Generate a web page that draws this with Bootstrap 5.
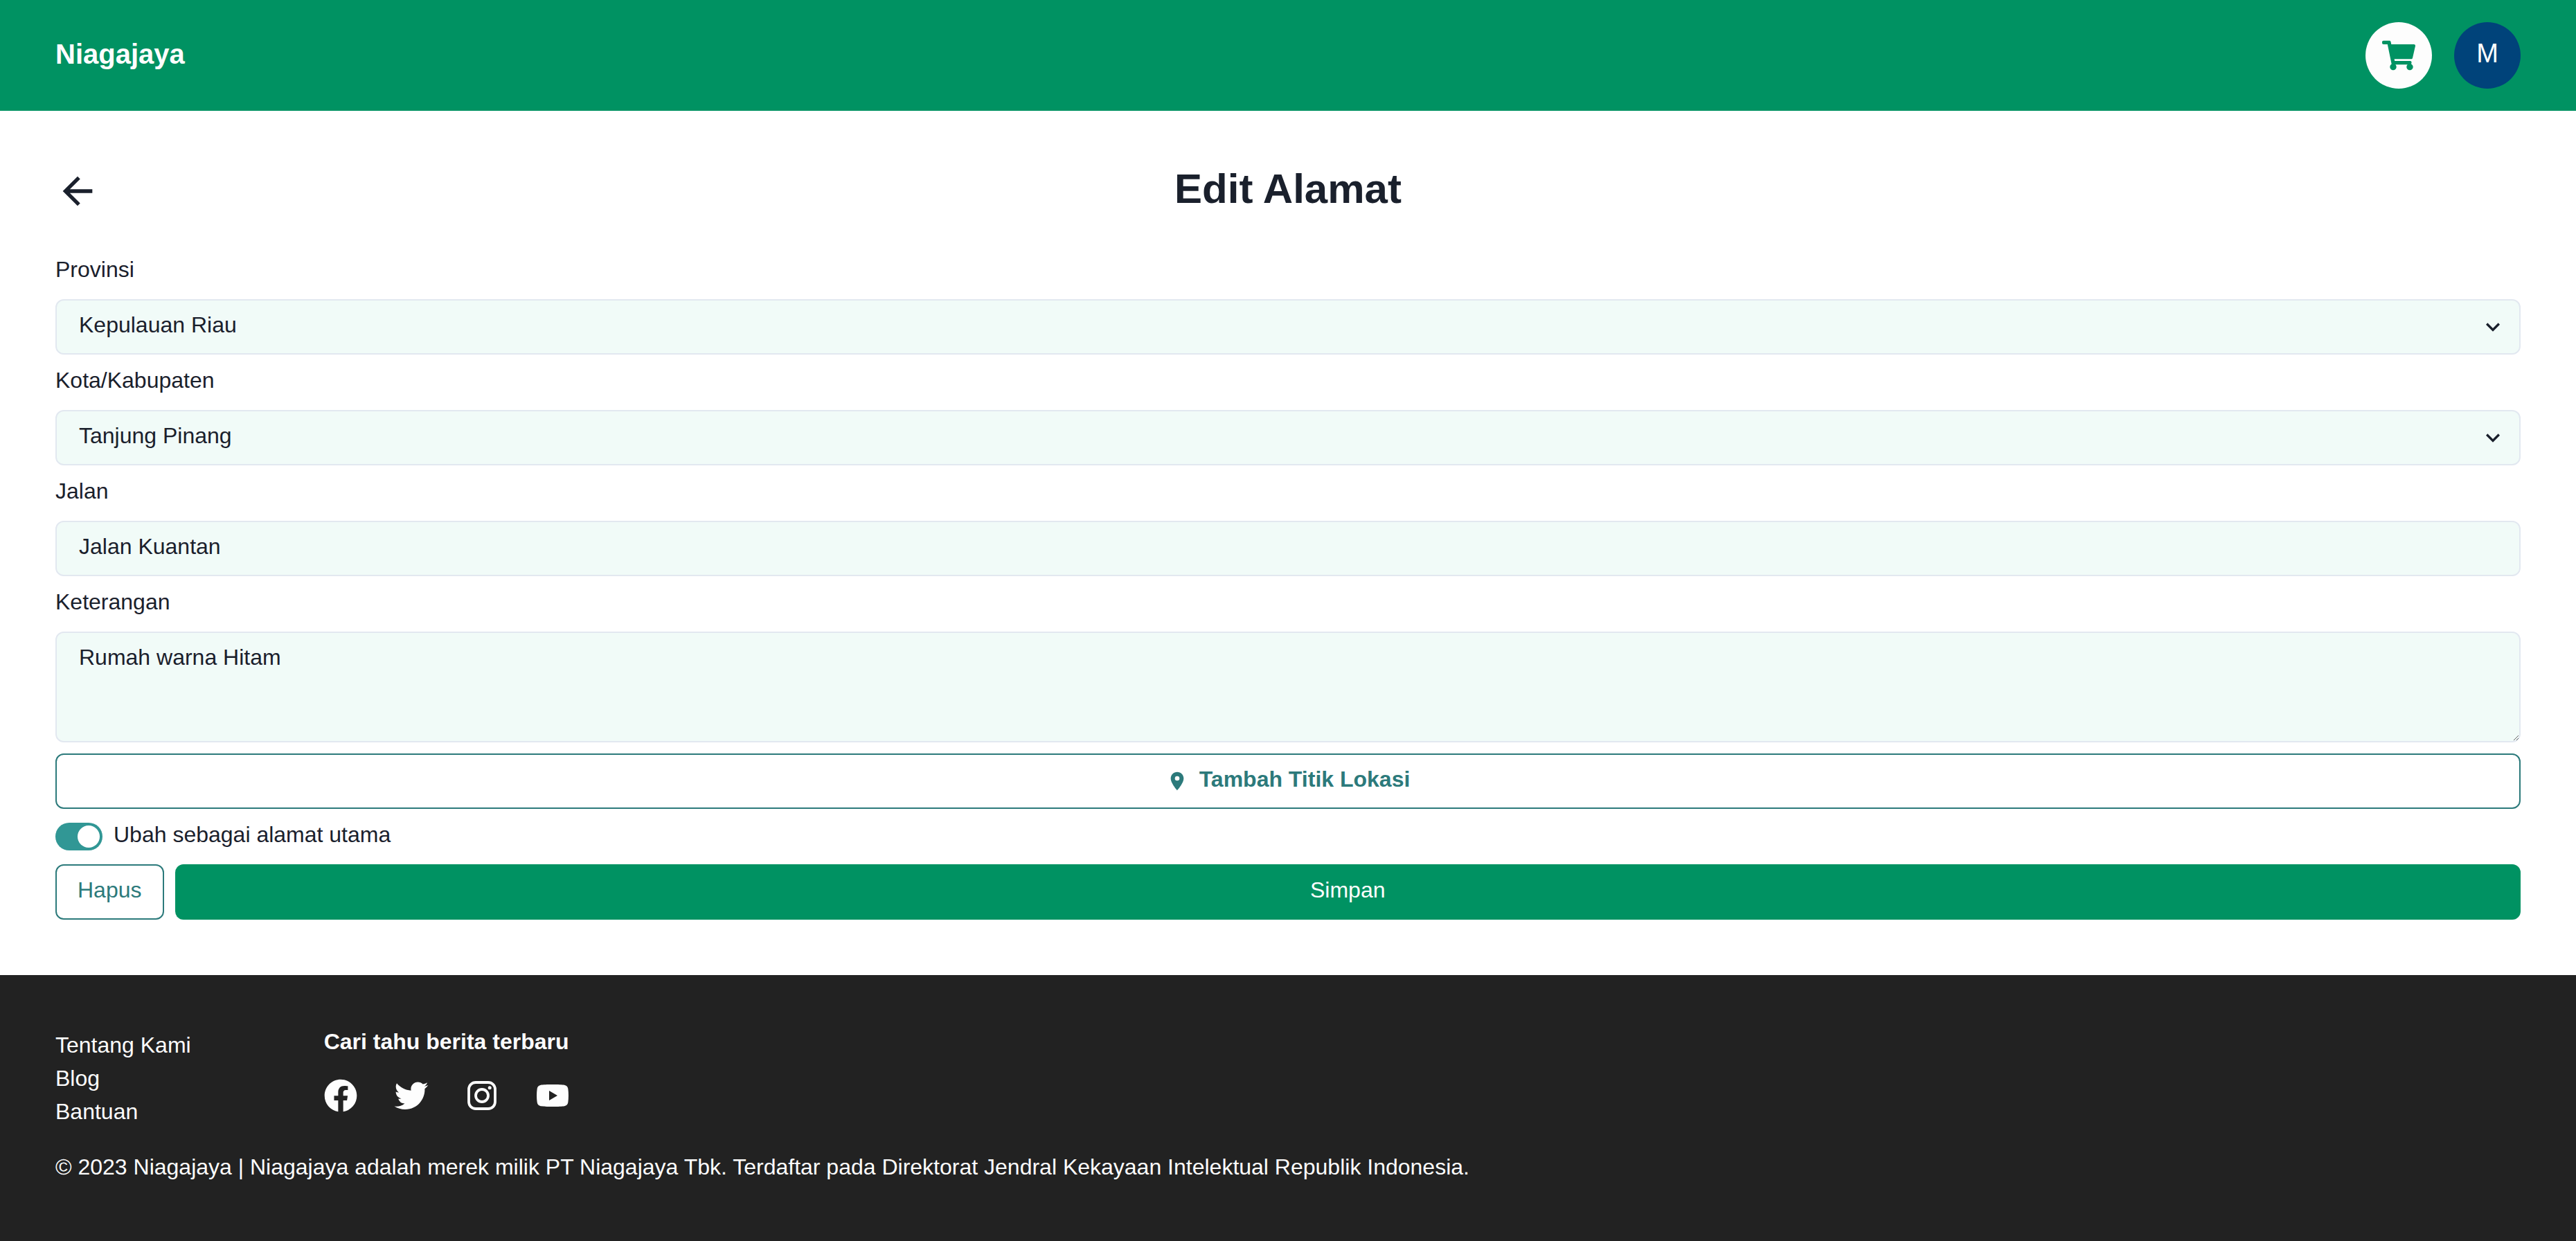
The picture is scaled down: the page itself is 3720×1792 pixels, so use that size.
<!DOCTYPE html>
<html lang="id">
<head>
<meta charset="utf-8">
<meta name="viewport" content="width=device-width, initial-scale=1">
<title>Edit Alamat - Niagajaya</title>
<link href="https://cdn.jsdelivr.net/npm/bootstrap@5.3.0/dist/css/bootstrap.min.css" rel="stylesheet">
<style>
  :root { --brand: #009262; --ink: #1a202c; --teal: #2c7a7b; --paper: #fdfdfd; }
  body { font-family: "Liberation Sans", Arial, sans-serif; font-size: 32px; line-height: 42px; color: var(--ink); background: #fff; }
  svg { display: block; flex: none; }
  .topbar { background: var(--brand); padding: 32px 80px; }
  .topbar-name { font-size: 40px; font-weight: 700; color: var(--paper); text-decoration: none; padding-bottom: 4px; }
  .topbar-actions { gap: 32px; }
  .round-btn { width: 96px; height: 96px; border: 0; }
  .cart-btn { background: var(--paper); color: var(--brand); }
  .user-btn { background: #00437a; color: #fff; font-size: 38px; padding: 0 0 6px; }
  .page { padding: 80px; }
  .title-row { display: grid; grid-template-columns: 64px 1fr 64px; margin-bottom: 56px; }
  .title-row h1 { font-size: 60px; font-weight: 700; line-height: 66px; padding-bottom: 6px; margin: 0; }
  .stack { display: flex; flex-direction: column; gap: 16px; }
  .form-label { margin: 0 0 22px; display: block; }
  .form-control, .form-select {
    display: block; font-size: 32px; line-height: 42px; color: var(--ink); background-color: #f1fbf8;
    border: 2px solid #e2e8f0; border-radius: 12px; padding: 14px 32px 20px;
  }
  .form-select {
    background-image: url("data:image/svg+xml,%3csvg xmlns='http://www.w3.org/2000/svg' viewBox='0 0 24 24'%3e%3cpath fill='%231a202c' d='M16.59 8.59L12 13.17 7.41 8.59 6 10l6 6 6-6z'/%3e%3c/svg%3e");
    background-size: 40px 40px; background-position: right 18px center;
  }
  textarea.form-control { height: 160px; }
  .btn { font-size: 32px; line-height: 42px; border-width: 2px; border-radius: 12px; padding: 14px 30px 20px; }
  .btn-line { color: var(--teal); border-color: var(--teal); }
  .btn-save { color: #fff; background: var(--brand); border-color: var(--brand); }
  .form-switch { padding: 0; margin: 0; min-height: 48px; }
  .form-switch .form-check-input {
    width: 68px; height: 40px; margin: 0; float: none; border: 0; border-radius: 20px;
  }
  .form-switch .form-check-input:checked {
    background-color: #319795; background-size: 40px 40px;
    background-image: url("data:image/svg+xml,%3csvg xmlns='http://www.w3.org/2000/svg' viewBox='-20 -20 40 40'%3e%3ccircle r='16' fill='%23fff'/%3e%3c/svg%3e");
  }
  .form-check-label { padding-bottom: 6px; }
  .site-foot { background: #222; color: var(--paper); padding: 80px; }
  .site-foot a { color: var(--paper); text-decoration: none; }
  .foot-cols { gap: 192px; margin-bottom: 32px; }
  .foot-links a, .foot-note { display: block; padding-bottom: 6px; }
  .foot-title { font-size: 32px; line-height: 32px; font-weight: 700; margin: 0 0 38px; }
  .foot-social svg { overflow: visible; }
</style>
<script src="https://cdn.jsdelivr.net/npm/bootstrap@5.3.0/dist/js/bootstrap.bundle.min.js"></script>
</head>
<body class="d-flex flex-column min-vh-100">

<header class="topbar d-flex align-items-center justify-content-between">
  <a class="topbar-name" href="#">Niagajaya</a>
  <div class="topbar-actions d-flex">
    <button type="button" class="round-btn cart-btn rounded-circle d-flex align-items-center justify-content-center" aria-label="Keranjang">
      <svg width="48" height="48" viewBox="0 -32 576 576" fill="currentColor" aria-hidden="true"><path d="M528.12 301.319l47.273-208C578.806 78.301 567.391 64 551.99 64H159.208l-9.166-44.81C147.758 8.021 137.93 0 126.529 0H24C10.745 0 0 10.745 0 24v16c0 13.255 10.745 24 24 24h69.883l70.248 343.435C147.325 417.1 136 435.222 136 456c0 30.928 25.072 56 56 56s56-25.072 56-56c0-15.674-6.447-29.835-16.824-40h209.647C430.447 426.165 424 440.326 424 456c0 30.928 25.072 56 56 56s56-25.072 56-56c0-22.172-12.888-41.332-31.579-50.405l5.517-24.276c3.413-15.018-8.002-29.319-23.403-29.319H218.117l-6.545-32h293.145c11.206 0 20.92-7.754 23.403-18.681z"/></svg>
    </button>
    <button type="button" class="round-btn user-btn rounded-circle">M</button>
  </div>
</header>

<main class="page flex-grow-1">
  <div class="title-row align-items-center">
    <a href="#" class="text-reset" aria-label="Kembali">
      <svg width="64" height="64" viewBox="0 0 24 24" fill="currentColor" aria-hidden="true"><path d="M20 11H7.83l5.59-5.59L12 4l-8 8 8 8 1.41-1.41L7.83 13H20v-2z"/></svg>
    </a>
    <h1 class="text-center">Edit Alamat</h1>
  </div>

  <form class="stack">
    <div>
      <label class="form-label" for="provinsi">Provinsi</label>
      <select class="form-select" id="provinsi"><option>Kepulauan Riau</option></select>
    </div>
    <div>
      <label class="form-label" for="kota">Kota/Kabupaten</label>
      <select class="form-select" id="kota"><option>Tanjung Pinang</option></select>
    </div>
    <div>
      <label class="form-label" for="jalan">Jalan</label>
      <input class="form-control" id="jalan" type="text" value="Jalan Kuantan">
    </div>
    <div>
      <label class="form-label" for="keterangan">Keterangan</label>
      <textarea class="form-control" id="keterangan">Rumah warna Hitam</textarea>
    </div>
    <button type="button" class="btn btn-line fw-bold d-flex justify-content-center align-items-start">
      <svg width="32" height="32" viewBox="0 0 24 24" fill="currentColor" class="me-3 mt-2" aria-hidden="true"><path d="M12 2C8.13 2 5 5.13 5 9c0 5.25 7 13 7 13s7-7.75 7-13c0-3.87-3.13-7-7-7zm0 9.500a2.500 2.500 0 1 1 0-5 2.500 2.500 0 0 1 0 5z"/></svg>
      Tambah Titik Lokasi
    </button>
    <div class="form-check form-switch d-flex align-items-center gap-3">
      <input class="form-check-input" type="checkbox" role="switch" id="utama" checked>
      <label class="form-check-label" for="utama">Ubah sebagai alamat utama</label>
    </div>
    <div class="d-flex gap-3">
      <button type="button" class="btn btn-line">Hapus</button>
      <button type="submit" class="btn btn-save flex-grow-1">Simpan</button>
    </div>
  </form>
</main>

<footer class="site-foot">
  <div class="foot-cols d-flex">
    <nav class="foot-links">
      <a href="#">Tentang Kami</a>
      <a href="#">Blog</a>
      <a href="#">Bantuan</a>
    </nav>
    <div>
      <h2 class="foot-title">Cari tahu berita terbaru</h2>
      <div class="foot-social d-flex justify-content-between">
        <a href="#" aria-label="Facebook"><svg width="48" height="48" viewBox="1.7 1.7 20.6 20.6" fill="currentColor"><path d="M12 2.04c-5.5 0-10 4.490-10 10.020c0 5 3.660 9.150 8.440 9.900v-7H7.900v-2.900h2.540V9.850c0-2.510 1.490-3.890 3.780-3.890c1.090 0 2.230.19 2.230.19v2.470h-1.260c-1.240 0-1.630.77-1.630 1.560v1.880h2.780l-.45 2.900h-2.330v7a10 10 0 0 0 8.440-9.900c0-5.530-4.500-10.020-10-10.020z"/></svg></a>
        <a href="#" aria-label="Twitter"><svg width="48" height="48" viewBox="1.7 2.1 20.6 20.6" fill="currentColor"><path d="M22.46 6c-.77.35-1.6.58-2.46.69.88-.53 1.56-1.37 1.88-2.38-.83.5-1.75.85-2.72 1.05C18.37 4.5 17.26 4 16 4c-2.35 0-4.27 1.92-4.27 4.29 0 .34.04.67.11.98C8.28 9.09 5.11 7.38 3 4.79c-.37.63-.58 1.37-.58 2.15 0 1.49.75 2.81 1.91 3.56-.71 0-1.37-.2-1.95-.5v.03c0 2.08 1.48 3.82 3.44 4.21a4.22 4.22 0 0 1-1.93.07 4.28 4.28 0 0 0 4 2.98 8.521 8.521 0 0 1-5.33 1.84c-.34 0-.68-.02-1.02-.06C3.44 20.29 5.7 21 8.12 21 16 21 20.33 14.46 20.33 8.79c0-.19 0-.37-.01-.56.84-.6 1.56-1.36 2.14-2.23z"/></svg></a>
        <a href="#" aria-label="Instagram"><svg width="48" height="48" viewBox="-24 -24 48 48" fill="none" stroke="currentColor" stroke-width="3.800"><rect x="-19" y="-19" width="38" height="38" rx="10"/><circle r="9"/><circle cx="11.200" cy="-11.200" r="2.500" fill="currentColor" stroke="none"/></svg></a>
        <a href="#" aria-label="YouTube"><svg width="48" height="48" viewBox="-24 -24 48 48" fill="currentColor"><path fill-rule="evenodd" d="M0-16C8-16 14-15.700 17-15.200C20-14.700 21.800-12.800 22.300-10C23.200-4 23.200 4 22.300 10C21.800 12.800 20 14.700 17 15.200C14 15.700 8 16 0 16S-14 15.700-17 15.200C-20 14.700-21.800 12.800-22.300 10C-23.200 4-23.200-4-22.300-10C-21.800-12.800-20-14.700-17-15.200C-14-15.700-8-16 0-16zM-5-7V7L7 0z"/></svg></a>
      </div>
    </div>
  </div>
  <div class="foot-note">© 2023 Niagajaya | Niagajaya adalah merek milik PT Niagajaya Tbk. Terdaftar pada Direktorat Jendral Kekayaan Intelektual Republik Indonesia.</div>
</footer>
</body>
</html>
